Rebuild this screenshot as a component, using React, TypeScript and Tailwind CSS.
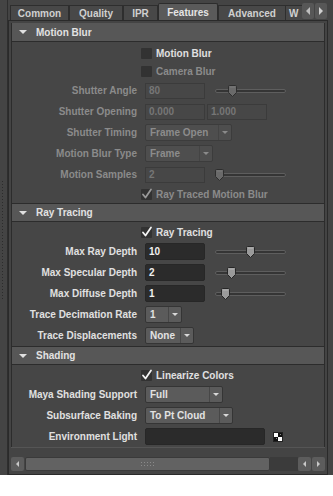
import React from "react";

function Thumb({ dim }: { dim?: boolean }) {
  return (
    <svg width="9" height="12" viewBox="0 0 9 12" className="block">
      <path
        d="M1.5 0.5 H7.5 Q8.5 0.5 8.5 1.5 V7.5 L4.5 11.5 L0.5 7.5 V1.5 Q0.5 0.5 1.5 0.5 Z"
        fill={dim ? "#6a6a6a" : "#9a9a9a"}
        stroke={dim ? "#2e2e2e" : "#262626"}
      />
      <path d="M2 2 H7" stroke={dim ? "#7a7a7a" : "#b5b5b5"} />
    </svg>
  );
}

function Slider({ pos, dim }: { pos: number; dim?: boolean }) {
  return (
    <div className="relative ml-[10px] h-[12px] w-[71px]">
      <div className="absolute left-0 right-0 top-[4px] h-[4px] rounded-full border border-[#5e5e5e] bg-[#353535]" />
      <div className="absolute top-0" style={{ left: pos }}>
        <Thumb dim={dim} />
      </div>
    </div>
  );
}

function Field({ value, dim, w = "w-[60px]" }: { value: string; dim?: boolean; w?: string }) {
  return (
    <div
      className={
        dim
          ? `${w} h-[16px] border border-[#3b3b3b] bg-[#474747] px-[3px] text-[#767676] leading-[14px]`
          : `${w} h-[17px] rounded-[2px] border border-[#272727] bg-[#2b2b2b] px-[3px] text-[#f0f0f0] leading-[15px]`
      }
    >
      {value}
    </div>
  );
}

function Dropdown({ value, w, dim }: { value: string; w: string; dim?: boolean }) {
  return (
    <div
      className={`${w} flex h-[17px] rounded-[2px] border ${
        dim ? "border-[#3c3c3c] bg-[#4e4e4e] text-[#8c8c8c]" : "border-[#353535] bg-[#5b5b5b] text-[#e2e2e2]"
      }`}
    >
      <div className="flex-1 px-[4px] leading-[15px]">{value}</div>
      <div className={`flex w-[13px] items-center justify-center border-l ${dim ? "border-[#444]" : "border-[#474747]"}`}>
        <div
          className={`h-0 w-0 border-x-[3px] border-t-[3px] border-x-transparent ${
            dim ? "border-t-[#8a8a8a]" : "border-t-[#d8d8d8]"
          }`}
        />
      </div>
    </div>
  );
}

function Row({ label, dim, children }: { label: string; dim?: boolean; children: React.ReactNode }) {
  return (
    <div className="flex h-[21px] items-center">
      <div className={`w-[125px] shrink-0 text-right ${dim ? "text-[#8b8b8b]" : "text-[#e0e0e0]"}`}>{label}</div>
      <div className="ml-[8px] flex items-center">{children}</div>
    </div>
  );
}

function Check({ label, checked, dim }: { label: string; checked?: boolean; dim?: boolean }) {
  return (
    <div className="flex h-[18px] items-center pl-[129px]">
      <div className="relative h-[11px] w-[11px] rounded-[1px] bg-[#323232]">
        {checked && (
          <svg width="12" height="12" viewBox="0 0 12 12" className="absolute left-0 -top-[1px]">
            <path
              d="M2 6.5 L4.5 9.5 L10 1.5"
              fill="none"
              stroke={dim ? "#9a9a9a" : "#f4f4f4"}
              strokeWidth="1.8"
              strokeLinecap="round"
              strokeLinejoin="round"
            />
          </svg>
        )}
      </div>
      <span className={`ml-[4px] ${dim ? "text-[#8b8b8b]" : "text-[#e0e0e0]"}`}>{label}</span>
    </div>
  );
}

function Header({ title, top }: { title: string; top?: boolean }) {
  return (
    <div
      className={`flex h-[19px] items-center border-b border-[#2c2c2c] bg-[#575757] ${
        top ? "" : "border-t border-t-[#2c2c2c]"
      }`}
    >
      <div className="ml-[7px] h-0 w-0 border-x-[4px] border-t-[4px] border-x-transparent border-t-[#e0e0e0]" />
      <span className="ml-[9px] text-[#e2e2e2]">{title}</span>
    </div>
  );
}

const tabs = ["Common", "Quality", "IPR", "Features", "Advanced"];
const tabW = ["w-[59px]", "w-[54px]", "w-[35px]", "w-[60px]", "w-[68px]"];

export default function App() {
  return (
    <div className="h-[496px] w-[333px] bg-white font-['Liberation_Sans',Arial,sans-serif] text-[10px] font-bold">
      <div className="flex h-[475px] bg-[#444444]">
        {/* splitter strip */}
        <div className="w-[8px] shrink-0 border-r border-[#2e2e2e] pt-[180px]">
          <div className="ml-[1px] h-[120px] w-[3px] bg-[radial-gradient(#2c2c2c_0.8px,transparent_0.8px)] bg-[size:3px_3px]" />
        </div>

        <div className="flex w-[325px] flex-col">
          {/* tabs */}
          <div className="flex h-[20px] items-end pl-[2px]">
            {tabs.map((t, i) =>
              t === "Features" ? (
                <div
                  key={t}
                  className={`${tabW[i]} flex h-[17px] items-center justify-center rounded-t-[2px] border-x border-t border-[#2c2c2c] bg-[#5a5a5a] text-[#e4e4e4]`}
                >
                  {t}
                </div>
              ) : (
                <div
                  key={t}
                  className={`${tabW[i]} flex h-[15px] items-center justify-center border-x border-t border-[#2e2e2e] bg-[#484848] text-[#d0d0d0]`}
                >
                  {t}
                </div>
              )
            )}
            <div className="flex h-[15px] w-[16px] items-center overflow-hidden border-t border-[#2e2e2e] bg-[#484848] pl-[3px] text-[#d0d0d0]">
              W
            </div>
            <div className="mb-[1px] flex h-[16px] w-[12px] items-center justify-center rounded-[2px] bg-[#575757]">
              <div className="h-0 w-0 border-y-[4px] border-r-[4px] border-y-transparent border-r-[#bdbdbd]" />
            </div>
            <div className="mb-[1px] ml-[1px] flex h-[16px] w-[12px] items-center justify-center rounded-[2px] bg-[#575757]">
              <div className="h-0 w-0 border-y-[4px] border-l-[4px] border-y-transparent border-l-[#d0d0d0]" />
            </div>
          </div>

          {/* panel */}
          <div className="flex w-[320px] flex-1 flex-col border border-[#2a2a2a] px-[2px] pt-[2px]">
            <div className="flex flex-col border-x border-[#2c2c2c] bg-[#464646]">
              <Header title="Motion Blur" top />
              <div className="pt-[2px]">
                <Check label="Motion Blur" />
                <Check label="Camera Blur" dim />
                <Row label="Shutter Angle" dim>
                  <Field value="80" dim />
                  <Slider pos={13} dim />
                </Row>
                <Row label="Shutter Opening" dim>
                  <Field value="0.000" dim />
                  <div className="ml-[2px]">
                    <Field value="1.000" dim />
                  </div>
                </Row>
                <Row label="Shutter Timing" dim>
                  <Dropdown value="Frame Open" w="w-[87px]" dim />
                </Row>
                <Row label="Motion Blur Type" dim>
                  <Dropdown value="Frame" w="w-[68px]" dim />
                </Row>
                <Row label="Motion Samples" dim>
                  <Field value="2" dim />
                  <Slider pos={0} dim />
                </Row>
                <Check label="Ray Traced Motion Blur" checked dim />
              </div>

              <Header title="Ray Tracing" />
              <div className="pt-[1px]">
                <Check label="Ray Tracing" checked />
                <Row label="Max Ray Depth">
                  <Field value="10" />
                  <Slider pos={31} />
                </Row>
                <Row label="Max Specular Depth">
                  <Field value="2" />
                  <Slider pos={12} />
                </Row>
                <Row label="Max Diffuse Depth">
                  <Field value="1" />
                  <Slider pos={6} />
                </Row>
                <Row label="Trace Decimation Rate">
                  <Dropdown value="1" w="w-[37px]" />
                </Row>
                <Row label="Trace Displacements">
                  <Dropdown value="None" w="w-[49px]" />
                </Row>
              </div>

              <Header title="Shading" />
              <div className="pt-[1px]">
                <Check label="Linearize Colors" checked />
                <Row label="Maya Shading Support">
                  <Dropdown value="Full" w="w-[78px]" />
                </Row>
                <Row label="Subsurface Baking">
                  <Dropdown value="To Pt Cloud" w="w-[88px]" />
                </Row>
                <Row label="Environment Light">
                  <Field value="" w="w-[120px]" />
                  <div className="ml-[8px] grid h-[10px] w-[10px] grid-cols-2 border border-[#222]">
                    <div className="bg-white" />
                    <div className="flex items-center justify-center bg-[#111]">
                      <div className="h-[1px] w-[1px] bg-[#888]" />
                    </div>
                    <div className="flex items-center justify-center bg-[#111]">
                      <div className="h-[1px] w-[1px] bg-[#888]" />
                    </div>
                    <div className="bg-white" />
                  </div>
                </Row>
              </div>
            </div>

            {/* horizontal scrollbar */}
            <div className="flex flex-1 items-start border-t border-[#555] pt-[9px]">
              <div className="flex h-[14px] w-full items-stretch">
                <div className="flex w-[13px] items-center justify-center rounded-[2px] bg-[#5c5c5c]">
                  <div className="h-0 w-0 border-y-[3px] border-r-[3px] border-y-transparent border-r-[#c8c8c8]" />
                </div>
                <div className="ml-[1px] flex w-[245px] items-center justify-center rounded-[2px] border border-[#3a3a3a] bg-[#626262]">
                  <div className="h-[6px] w-[15px] bg-[radial-gradient(#8a8a8a_0.7px,transparent_0.7px)] bg-[size:3px_3px]" />
                </div>
                <div className="flex-1 bg-[#3b3b3b]" />
                <div className="flex w-[13px] items-center justify-center rounded-[2px] bg-[#5c5c5c]">
                  <div className="h-0 w-0 border-y-[3px] border-r-[3px] border-y-transparent border-r-[#c8c8c8]" />
                </div>
                <div className="ml-[1px] flex w-[13px] items-center justify-center rounded-[2px] bg-[#5c5c5c]">
                  <div className="h-0 w-0 border-y-[3px] border-l-[3px] border-y-transparent border-l-[#c8c8c8]" />
                </div>
              </div>
            </div>
          </div>
        </div>
      </div>
    </div>
  );
}
